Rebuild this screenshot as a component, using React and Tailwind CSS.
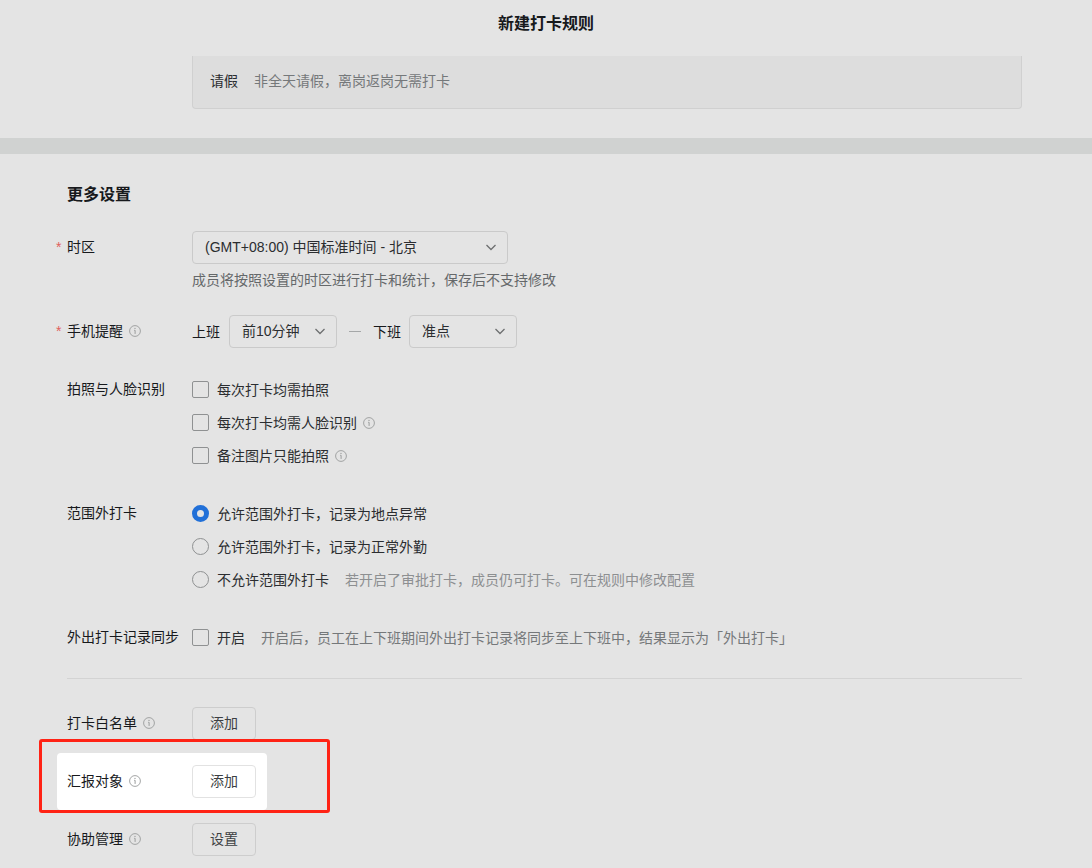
import { useState } from "react";

const photoOptions = [
  { id: "photo", label: "每次打卡均需拍照" },
  { id: "face", label: "每次打卡均需人脸识别", info: true },
  { id: "remark", label: "备注图片只能拍照", info: true },
];

const rangeOptions = [
  { id: "abnormal", label: "允许范围外打卡，记录为地点异常" },
  { id: "normal", label: "允许范围外打卡，记录为正常外勤" },
  {
    id: "deny",
    label: "不允许范围外打卡",
    hint: "若开启了审批打卡，成员仍可打卡。可在规则中修改配置",
  },
];

function InfoIcon() {
  return (
    <svg
      className="w-3 h-3 shrink-0 text-[#9a9c9c]"
      viewBox="0 0 12 12"
      fill="none"
      stroke="currentColor"
      aria-hidden="true"
    >
      <circle cx="6" cy="6" r="5.4" strokeWidth="0.9" />
      <path d="M5.2 5.3h0.9v3.6" strokeWidth="1" />
      <circle cx="6" cy="3.4" r="0.65" fill="currentColor" stroke="none" />
    </svg>
  );
}

function Select({ id, width, options }) {
  return (
    <div className={`relative ${width}`}>
      <select
        id={id}
        className="w-full h-[33px] pl-3 pr-8 pb-px appearance-none rounded-[4px] border border-[#cacaca] bg-transparent text-[#2b2d30]"
      >
        {options.map((option) => (
          <option key={option}>{option}</option>
        ))}
      </select>
      <svg
        className="absolute right-3 top-3 w-[10px] h-[10px] text-[#6d6f70] pointer-events-none"
        viewBox="0 0 10 10"
        fill="none"
        stroke="currentColor"
        strokeWidth="1.3"
      >
        <path d="M0.5 2L5 6.5l4.5-4.5" />
      </svg>
    </div>
  );
}

function RowLabel({ text, htmlFor, required, info }) {
  const Tag = htmlFor ? "label" : "span";
  return (
    <div className="relative flex items-center gap-1.5 w-[125px] h-8 shrink-0 whitespace-nowrap text-[#17191c]">
      {required && (
        <span className="absolute -left-[11px] text-[#e0605c]">*</span>
      )}
      <Tag htmlFor={htmlFor}>{text}</Tag>
      {info && <InfoIcon />}
    </div>
  );
}

function Checkbox({ id, label, info, hint }) {
  return (
    <div className="flex items-center h-[33px]">
      <input
        id={id}
        type="checkbox"
        className="w-[17px] h-[17px] shrink-0 appearance-none rounded-[2px] border border-[#8f9192] checked:bg-[#2170d8]"
      />
      <label htmlFor={id} className="ml-2">
        {label}
      </label>
      {info && (
        <span className="ml-1.5">
          <InfoIcon />
        </span>
      )}
      {hint && <span className="ml-4 text-[#75787a]">{hint}</span>}
    </div>
  );
}

function ActionButton({ children, border = "border-[#cdcdcd]" }) {
  return (
    <button
      type="button"
      className={`w-16 h-[33px] pb-0.5 rounded-[4px] border text-[#3c3f42] ${border}`}
    >
      {children}
    </button>
  );
}

export default function App() {
  const [range, setRange] = useState("abnormal");

  return (
    <div className="min-h-screen bg-[#e4e4e4] pb-3 text-sm text-[#2b2d30] font-['Liberation_Sans','Noto_Sans_CJK_SC',sans-serif]">
      <header className="flex items-center justify-center h-14 pb-2">
        <h1 className="text-base font-bold text-[#17191c]">新建打卡规则</h1>
      </header>

      {/* Leave rule summary */}
      <section className="pl-48 pr-[70px] pb-[29px]">
        <div className="flex items-center h-[53px] px-[17px] pb-0.5 rounded-b-[4px] border border-t-0 border-[#d0d0d0] bg-[#dddddd]">
          <span>请假</span>
          <span className="ml-4 text-[#75787a]">
            非全天请假，离岗返岗无需打卡
          </span>
        </div>
      </section>

      <div className="h-4 bg-[#d0d2d1]" />

      <main className="pl-[67px] pr-[70px] pt-[29px]">
        <h2 className="text-base leading-6 font-bold text-[#17191c]">
          更多设置
        </h2>

        <form className="flex flex-col gap-[25px] mt-6">
          <div className="flex">
            <RowLabel text="时区" htmlFor="timezone" required />
            <div className="flex-1">
              <Select
                id="timezone"
                width="w-[316px]"
                options={["(GMT+08:00) 中国标准时间 - 北京"]}
              />
              <p className="mt-1.5 leading-5 text-[#65686a]">
                成员将按照设置的时区进行打卡和统计，保存后不支持修改
              </p>
            </div>
          </div>

          <div className="flex">
            <RowLabel text="手机提醒" required info />
            <div className="flex items-center">
              <label htmlFor="remind-on" className="text-[#17191c]">
                上班
              </label>
              <span className="w-[9px]" />
              <Select
                id="remind-on"
                width="w-[108px]"
                options={["前10分钟", "准点"]}
              />
              <span className="w-3 h-px mx-3 bg-[#a5a7a8]" />
              <label htmlFor="remind-off" className="text-[#17191c]">
                下班
              </label>
              <span className="w-2" />
              <Select
                id="remind-off"
                width="w-[108px]"
                options={["准点", "后10分钟"]}
              />
            </div>
          </div>

          <div className="flex">
            <RowLabel text="拍照与人脸识别" />
            <div>
              {photoOptions.map((option) => (
                <Checkbox key={option.id} {...option} />
              ))}
            </div>
          </div>

          <div className="flex">
            <RowLabel text="范围外打卡" />
            <div>
              {rangeOptions.map(({ id, label, hint }) => (
                <div key={id} className="flex items-center h-[33px]">
                  <input
                    id={id}
                    type="radio"
                    name="range"
                    checked={range === id}
                    onChange={() => setRange(id)}
                    className="w-[17px] h-[17px] shrink-0 appearance-none rounded-full border border-[#8f9192] checked:border-[5px] checked:border-[#2170d8]"
                  />
                  <label htmlFor={id} className="ml-2">
                    {label}
                  </label>
                  {hint && <span className="ml-4 text-[#8d8f91]">{hint}</span>}
                </div>
              ))}
            </div>
          </div>

          <div className="flex">
            <RowLabel text="外出打卡记录同步" />
            <Checkbox
              id="sync"
              label="开启"
              hint="开启后，员工在上下班期间外出打卡记录将同步至上下班中，结果显示为「外出打卡」"
            />
          </div>
        </form>

        <hr className="mt-6 border-[#d3d3d3]" />

        <div className="flex flex-col gap-[25px] mt-7">
          <div className="flex">
            <RowLabel text="打卡白名单" info />
            <ActionButton>添加</ActionButton>
          </div>

          {/* Highlighted row with its callout frame */}
          <div className="relative flex w-[210px] -my-3 -ml-2.5 py-3 pl-2.5 rounded-[4px] bg-white">
            <RowLabel text="汇报对象" info />
            <ActionButton border="border-[#e2e2e2]">添加</ActionButton>
            <div className="absolute -top-[14px] -left-[18px] w-[291px] h-[74px] rounded-[3px] border-3 border-[#ff2315] pointer-events-none" />
          </div>

          <div className="flex">
            <RowLabel text="协助管理" info />
            <ActionButton>设置</ActionButton>
          </div>
        </div>
      </main>
    </div>
  );
}
